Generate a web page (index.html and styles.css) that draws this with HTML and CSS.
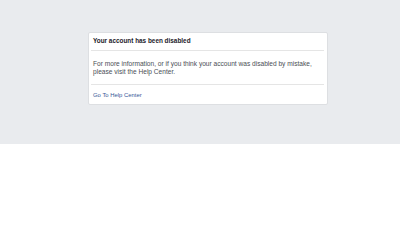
FILE: index.html
```html
<!DOCTYPE html>
<html lang="en">
<head>
  <meta charset="UTF-8">
  <title>Account disabled</title>
  <link rel="stylesheet" href="styles.css">
</head>
<body>
  <div class="page">
    <div class="card">
      <div class="card-header">Your account has been disabled</div>
      <div class="card-body">
        For more information, or if you think your account was disabled by mistake,<br>
        please visit the Help Center.
      </div>
      <div class="card-footer">
        <a href="#">Go To Help Center</a>
      </div>
    </div>
  </div>
</body>
</html>
```

FILE: styles.css
```css
* {
  box-sizing: border-box;
  margin: 0;
  padding: 0;
}

body {
  font-family: "Liberation Sans", Arial, sans-serif;
  background-color: #ffffff;
}

.page {
  height: 144px;
  background-color: #e9ebee;
  padding-top: 32px;
}

.card {
  width: 240px;
  margin-left: 88px;
  background-color: #ffffff;
  border: 1px solid #dddfe2;
  border-radius: 2px;
  padding: 0 3px 0 2px;
}

.card-header {
  padding: 3px 2px 5px;
  line-height: 9px;
  font-size: 6.4px;
  font-weight: bold;
  color: #1d2129;
  border-bottom: 1px solid #e5e5e5;
}

.card-body {
  padding: 9px 2px 7px;
  line-height: 8.4px;
  font-size: 6.6px;
  color: #4b4f56;
  border-bottom: 1px solid #e5e5e5;
}

.card-footer {
  padding: 6.5px 2px 3.5px;
  line-height: 9px;
  font-size: 5.9px;
}

.card-footer a {
  color: #385898;
  text-decoration: none;
}
```
